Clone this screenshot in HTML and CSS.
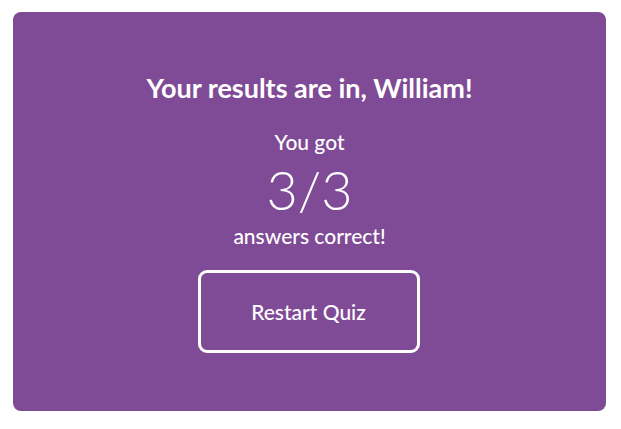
FILE: index.html
```html
<!DOCTYPE html>
<html>
<head>
<meta charset="utf-8">
<link rel="stylesheet" href="styles.css">
</head>
<body>
<main class="card">
  <h1 class="title">Your results are in, William!</h1>
  <p class="got">You got</p>
  <p class="score">3/3</p>
  <p class="correct">answers correct!</p>
  <button class="restart">Restart Quiz</button>
</main>
</body>
</html>
```
FILE: styles.css
```css
html, body {
  margin: 0;
  background: #ffffff;
}
body {
  padding: 12px 15px 0 13px;
  font-family: Lato, "Open Sans", sans-serif;
  color: #ffffff;
}
.card {
  background: #7f4b96;
  border-radius: 8px;
  height: 399px;
  box-sizing: border-box;
  display: flex;
  flex-direction: column;
  align-items: center;
  padding-top: 60px;
}
.title {
  margin: 0;
  font-size: 27px;
  font-weight: 700;
  line-height: 32px;
}
.got {
  margin: 25px 0 0;
  font-size: 21px;
  font-weight: 500;
  line-height: 26px;
}
.score {
  margin: 7px 0 0;
  font-size: 54px;
  font-weight: 300;
  line-height: 56px;
}
.correct {
  margin: 5px 0 0;
  font-size: 21px;
  font-weight: 500;
  line-height: 26px;
}
.restart {
  margin: 21px 0 0 -2px;
  width: 222px;
  height: 83px;
  border: 3px solid #ffffff;
  border-radius: 9px;
  background: transparent;
  color: #ffffff;
  font-family: inherit;
  font-size: 21px;
  font-weight: 500;
  cursor: pointer;
}
```
